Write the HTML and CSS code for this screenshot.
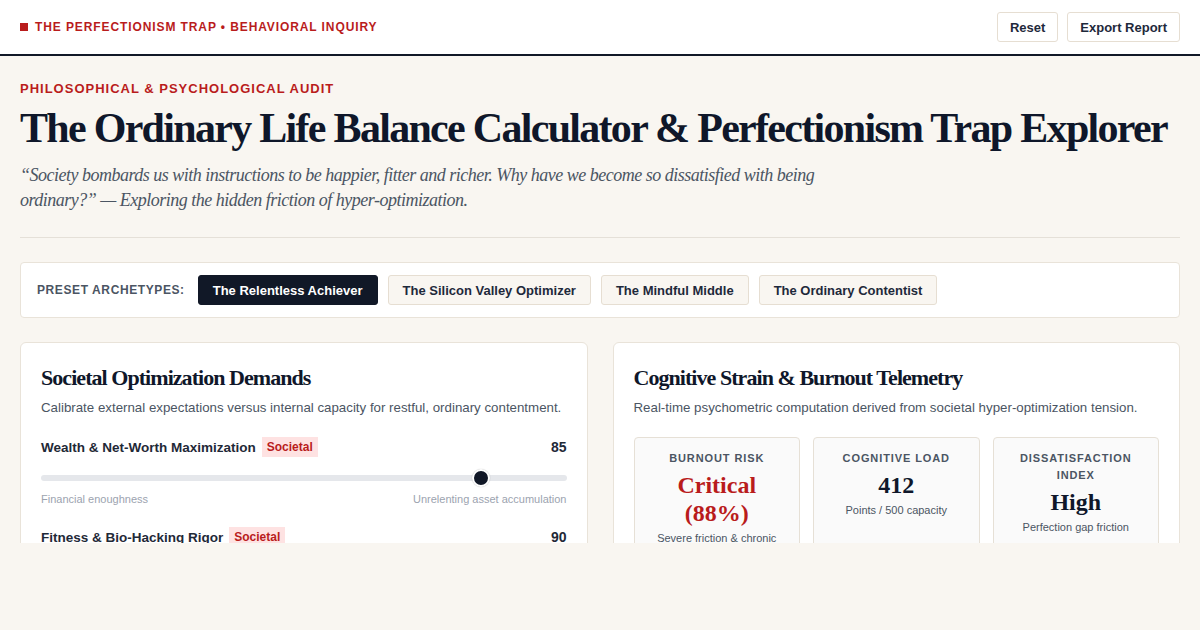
FILE: index.html
```html
<!DOCTYPE html>
<html lang="en">
<head>
<meta charset="utf-8">
<title>The Ordinary Life Balance Calculator</title>
<link rel="stylesheet" href="styles.css">
</head>
<body>
<div class="app">
  <header class="topbar">
    <div class="brand"><span class="brand-mark"></span>THE PERFECTIONISM TRAP • BEHAVIORAL INQUIRY</div>
    <div class="top-actions">
      <button class="btn">Reset</button>
      <button class="btn">Export Report</button>
    </div>
  </header>
  <main class="main">
    <div class="eyebrow">PHILOSOPHICAL &amp; PSYCHOLOGICAL AUDIT</div>
    <h1 class="title">The Ordinary Life Balance Calculator &amp; Perfectionism Trap Explorer</h1>
    <p class="lede">“Society bombards us with instructions to be happier, fitter and richer. Why have we become so dissatisfied with being ordinary?” — Exploring the hidden friction of hyper-optimization.</p>
    <hr class="divider">
    <section class="presets">
      <span class="presets-label">PRESET ARCHETYPES:</span>
      <button class="chip chip-active">The Relentless Achiever</button>
      <button class="chip">The Silicon Valley Optimizer</button>
      <button class="chip">The Mindful Middle</button>
      <button class="chip">The Ordinary Contentist</button>
    </section>
    <div class="grid">
      <section class="card">
        <h2 class="card-title">Societal Optimization Demands</h2>
        <p class="card-desc">Calibrate external expectations versus internal capacity for restful, ordinary contentment.</p>
        <div class="control">
          <div class="control-head">
            <span class="control-label">Wealth &amp; Net-Worth Maximization</span>
            <span class="badge">Societal</span>
            <span class="control-value">85</span>
          </div>
          <input class="range" type="range" min="0" max="100" value="85">
          <div class="range-labels"><span>Financial enoughness</span><span>Unrelenting asset accumulation</span></div>
        </div>
        <div class="control">
          <div class="control-head">
            <span class="control-label">Fitness &amp; Bio-Hacking Rigor</span>
            <span class="badge">Societal</span>
            <span class="control-value">90</span>
          </div>
          <input class="range" type="range" min="0" max="100" value="90">
          <div class="range-labels"><span>Gentle movement</span><span>Quantified body optimization</span></div>
        </div>
      </section>
      <section class="card">
        <h2 class="card-title">Cognitive Strain &amp; Burnout Telemetry</h2>
        <p class="card-desc">Real-time psychometric computation derived from societal hyper-optimization tension.</p>
        <div class="metrics">
          <div class="metric">
            <div class="metric-label">BURNOUT RISK</div>
            <div class="metric-value metric-red">Critical (88%)</div>
            <div class="metric-sub">Severe friction &amp; chronic exhaustion</div>
          </div>
          <div class="metric">
            <div class="metric-label">COGNITIVE LOAD</div>
            <div class="metric-value">412</div>
            <div class="metric-sub">Points / 500 capacity</div>
          </div>
          <div class="metric">
            <div class="metric-label">DISSATISFACTION INDEX</div>
            <div class="metric-value">High</div>
            <div class="metric-sub">Perfection gap friction</div>
          </div>
        </div>
      </section>
    </div>
  </main>
</div>
</body>
</html>
```
FILE: styles.css
```css
* { box-sizing: border-box; }
html, body { margin: 0; padding: 0; }
body {
  background: #f9f6f1;
  font-family: "Liberation Sans", Arial, sans-serif;
  color: #111827;
}
.app { height: 543px; overflow: hidden; }
.topbar {
  background: #ffffff;
  height: 56px;
  border-bottom: 2px solid #111827;
  display: flex;
  align-items: center;
  justify-content: space-between;
  padding: 0 20px;
}
.brand {
  display: flex;
  align-items: center;
  color: #b91c1c;
  font-size: 12px;
  font-weight: 700;
  letter-spacing: 0.9px;
}
.brand-mark {
  width: 8px;
  height: 8px;
  background: #b91c1c;
  margin-right: 7px;
}
.top-actions { display: flex; gap: 9px; }
.btn {
  font-family: "Liberation Sans", Arial, sans-serif;
  font-size: 13px;
  font-weight: 700;
  color: #1e293b;
  background: #ffffff;
  border: 1px solid #e6ded2;
  border-radius: 3px;
  height: 30px;
  padding: 0 12px;
}
.main { padding: 24px 20px 0 20px; }
.eyebrow {
  color: #b91c1c;
  font-size: 13px;
  font-weight: 700;
  letter-spacing: 1px;
  line-height: 18px;
}
.title {
  font-family: "Liberation Serif", "Times New Roman", serif;
  font-size: 42px;
  font-weight: 700;
  letter-spacing: -1.7px;
  line-height: 50px;
  color: #0f172a;
  margin: 5px 0 10px 0;
  white-space: nowrap;
}
.lede {
  font-family: "Liberation Serif", "Times New Roman", serif;
  font-style: italic;
  font-size: 18px;
  letter-spacing: -0.5px;
  line-height: 25px;
  color: #4b5563;
  max-width: 830px;
  margin: 0 0 24px 0;
}
.divider {
  border: 0;
  border-top: 1px solid #e5e0d8;
  margin: 0 0 24px 0;
}
.presets {
  background: #ffffff;
  border: 1px solid #e9e3d9;
  border-radius: 4px;
  height: 56px;
  display: flex;
  align-items: center;
  padding: 0 16px;
  gap: 10px;
}
.presets-label {
  font-size: 12px;
  font-weight: 700;
  color: #4b5563;
  letter-spacing: 0.6px;
  margin-right: 3px;
}
.chip {
  font-family: "Liberation Sans", Arial, sans-serif;
  font-size: 13px;
  font-weight: 700;
  color: #1e293b;
  background: #f9f6f1;
  border: 1px solid #e6ded2;
  border-radius: 3px;
  height: 30px;
  padding: 0 14px;
}
.chip-active {
  background: #111827;
  color: #ffffff;
  border-color: #111827;
}
.grid {
  display: grid;
  grid-template-columns: 1fr 1fr;
  gap: 25px;
  margin-top: 24px;
}
.card {
  background: #ffffff;
  border: 1px solid #e9e3d9;
  border-radius: 6px;
  padding: 22px 20px 20px 20px;
}
.card-title {
  font-family: "Liberation Serif", "Times New Roman", serif;
  font-size: 22px;
  font-weight: 700;
  color: #0f172a;
  margin: 0 0 8px 0;
  line-height: 26px;
  letter-spacing: -0.95px;
}
.card-desc {
  font-size: 13.3px;
  color: #4b5563;
  margin: 0 0 20px 0;
  line-height: 18px;
}
.control { margin-bottom: 22px; }
.control-head {
  display: flex;
  align-items: center;
  gap: 6px;
  height: 20px;
}
.control-label {
  font-size: 13.5px;
  font-weight: 700;
  color: #1f2937;
}
.badge {
  background: #fee2e2;
  color: #b91c1c;
  font-size: 12px;
  font-weight: 700;
  padding: 3px 5px;
  line-height: 14px;
}
.control-value {
  margin-left: auto;
  font-size: 14px;
  font-weight: 700;
  color: #1f2937;
}
.range {
  -webkit-appearance: none;
  appearance: none;
  display: block;
  width: 100%;
  height: 6px;
  background: #e5e7eb;
  border-radius: 3px;
  margin: 18px 0 0 0;
  outline: none;
}
.range::-webkit-slider-thumb {
  -webkit-appearance: none;
  appearance: none;
  width: 18px;
  height: 18px;
  border-radius: 50%;
  background: #111827;
  border: 2px solid #ffffff;
  box-shadow: 0 0 1px rgba(0,0,0,0.3);
}
.range-labels {
  display: flex;
  justify-content: space-between;
  font-size: 11px;
  color: #9ca3af;
  margin-top: 12px;
}
.metrics {
  display: grid;
  grid-template-columns: 1fr 1fr 1fr;
  gap: 13px;
}
.metric {
  background: #fafafa;
  border: 1px solid #e6e0d6;
  border-radius: 4px;
  padding: 12px 12px 14px 12px;
  text-align: center;
}
.metric-label {
  font-size: 11px;
  font-weight: 700;
  letter-spacing: 0.9px;
  color: #4b5563;
  line-height: 17px;
}
.metric-value {
  font-family: "Liberation Serif", "Times New Roman", serif;
  font-size: 24px;
  font-weight: 700;
  line-height: 28px;
  color: #0f172a;
  margin: 4px 0 4px 0;
}
.metric-red { color: #b91c1c; }
.metric-sub {
  font-size: 11px;
  color: #4b5563;
  line-height: 15px;
}
```
